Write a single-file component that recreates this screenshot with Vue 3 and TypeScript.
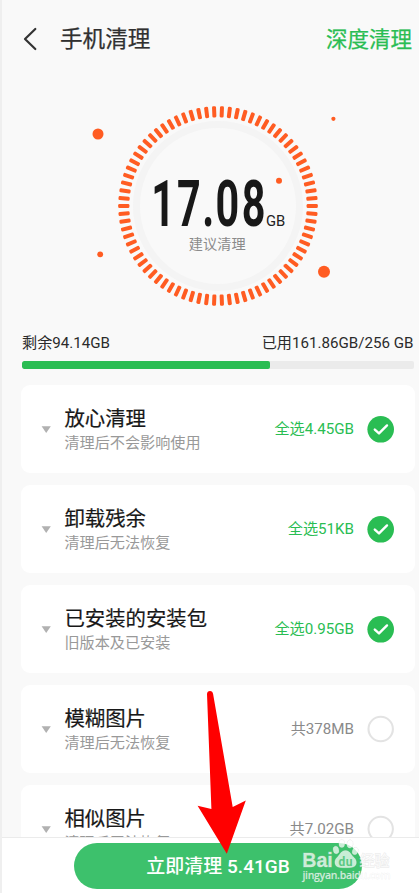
<script setup lang="ts">
interface CleanItem {
  title: string
  note: string
  size: string
  checked: boolean
}

const items: CleanItem[] = [
  { title: '放心清理', note: '清理后不会影响使用', size: '全选4.45GB', checked: true },
  { title: '卸载残余', note: '清理后无法恢复', size: '全选51KB', checked: true },
  { title: '已安装的安装包', note: '旧版本及已安装', size: '全选0.95GB', checked: true },
  { title: '模糊图片', note: '清理后无法恢复', size: '共378MB', checked: false },
  { title: '相似图片', note: '清理后无法恢复', size: '共7.02GB', checked: false },
]

const tickCount = 78
const ticks: number[] = Array.from({ length: tickCount }, (_, i) => (i * 360) / tickCount)
const usedPercent = 63.2
</script>

<template>
  <div class="screen">
    <header class="header">
      <svg class="back" width="14" height="24" viewBox="0 0 14 24">
        <path d="M12.3 2 L2 12 L12.3 22" />
      </svg>
      <h1 class="heading">手机清理</h1>
      <span class="deep">深度清理</span>
    </header>

    <svg class="gauge" width="419" height="240" viewBox="0 80 419 240">
      <circle class="halo" cx="218" cy="206" r="81.5" />
      <rect
        v-for="angle in ticks"
        :key="angle"
        class="orange"
        x="306.6"
        y="204"
        width="11.2"
        height="4"
        rx="1.3"
        :transform="`rotate(${angle} 218 206)`"
      />
      <circle class="orange" cx="98" cy="134" r="5.5" />
      <circle class="orange" cx="333.4" cy="118.8" r="2.1" />
      <circle class="orange" cx="100.2" cy="254.3" r="2.9" />
      <circle class="orange" cx="324" cy="271.7" r="6" />
      <circle class="orange" cx="279" cy="180.8" r="3" />
      <text class="amount" transform="translate(150 226) scale(0.64 1)" x="1.8 42.2 81.7 102.4 143.2">17.08</text>
      <text class="unit" x="266" y="225.6">GB</text>
      <text class="advice" x="188.8" y="249" textLength="57">建议清理</text>
    </svg>

    <section class="storage">
      <div class="labels">
        <span>剩余94.14GB</span>
        <span>已用161.86GB/256 GB</span>
      </div>
      <div class="track"><div class="used" :style="{ width: usedPercent + '%' }"></div></div>
    </section>

    <main class="list">
      <article v-for="item in items" :key="item.title" class="card">
        <svg class="caret" width="10" height="7" viewBox="0 0 10 7"><path d="M0.6 0.3H9.8L5.2 6.9Z" /></svg>
        <div class="info">
          <h2 class="title">{{ item.title }}</h2>
          <p class="note">{{ item.note }}</p>
        </div>
        <span class="size" :class="{ selected: item.checked }">{{ item.size }}</span>
        <svg class="mark" width="28" height="28" viewBox="0 0 28 28">
          <template v-if="item.checked">
            <circle class="filled" cx="13.7" cy="14.3" r="13.3" />
            <path class="tick" d="M7.8 14.6L12 18.4L20 10.4" />
          </template>
          <circle v-else class="empty" cx="13.7" cy="14" r="12.2" />
        </svg>
      </article>
    </main>

    <footer class="footer">
      <button class="clean" type="button">立即清理 5.41GB</button>
    </footer>

    <svg class="pointer" width="50" height="164" viewBox="197 690 50 164">
      <path d="M207 694Q207.2 691 210 691Q212.6 691 213.1 694L232.7 807L245.8 800.6L226.8 853.8L197.6 805.7L211.4 809Z" />
    </svg>

    <svg class="watermark" width="100" height="50" viewBox="300 838 100 50">
      <g class="edge">
        <text class="brand" x="302.3" y="867" textLength="30.5" lengthAdjust="spacingAndGlyphs">Bai</text>
        <ellipse cx="336" cy="850" rx="2.8" ry="3.8" transform="rotate(-12 336 850)" />
        <ellipse cx="341.8" cy="843.6" rx="2.9" ry="4" />
        <ellipse cx="350" cy="844" rx="2.9" ry="4" transform="rotate(10 350 844)" />
        <ellipse cx="355.2" cy="851" rx="2.8" ry="3.8" transform="rotate(18 355.2 851)" />
        <path d="M345.5 850.5C341 850.5 339.8 855 337 857.5C333.6 860.5 334 867 340 867.5C344 867.8 347 867.8 351 867.5C357.5 867 357.6 860.5 354 857.5C351 855 350 850.5 345.5 850.5Z" />
        <text class="brand-cn" x="359.5" y="865.6" textLength="30">经验</text>
        <text class="site" x="302.5" y="878.5" textLength="88">jingyan.baidu.com</text>
      </g>
      <text class="du" x="338.4" y="865.5" textLength="14">du</text>
    </svg>
  </div>
</template>

<style>
html,
body {
  margin: 0;
  overflow: hidden;
}
</style>

<style scoped>
.screen {
  position: relative;
  box-sizing: border-box;
  width: 419px;
  height: 893px;
  overflow: hidden;
  display: flex;
  flex-direction: column;
  border-left: 2px solid #efefef;
  background: #f9f9f9;
  font-family: Roboto, 'Noto Sans CJK SC', sans-serif;
  color: #1c1c1c;
}
.header {
  flex: none;
  height: 80px;
  box-sizing: border-box;
  padding: 0 7px 2px 21px;
  display: flex;
  align-items: center;
}
.back path {
  fill: none;
  stroke: #333;
  stroke-width: 2.2;
  stroke-linecap: round;
  stroke-linejoin: round;
}
.heading {
  margin: 0 0 0 23px;
  padding-top: 2px;
  font-size: 22.6px;
  line-height: 30px;
  font-weight: 400;
  color: #303030;
  -webkit-text-stroke: 0.25px #303030;
}
.deep {
  margin-left: auto;
  padding-top: 2px;
  font-size: 21.5px;
  line-height: 30px;
  color: #2abd53;
  -webkit-text-stroke: 0.25px #2abd53;
}
.gauge {
  flex: none;
  margin-left: -2px;
}
.halo {
  fill: none;
  stroke: #f4f4f4;
  stroke-width: 7;
}
.orange {
  fill: #ff5c22;
}
.amount {
  font-size: 64.5px;
  font-weight: 700;
  fill: #181818;
}
.unit {
  font-size: 14.8px;
  fill: #222;
}
.advice {
  font-size: 14.2px;
  fill: #8b8b8b;
}
.storage {
  flex: none;
  height: 65px;
  box-sizing: border-box;
  padding: 12px 5px 0 20px;
}
.labels {
  height: 29px;
  padding-right: 0.5px;
  display: flex;
  justify-content: space-between;
  font-size: 15.15px;
  line-height: 22px;
  white-space: nowrap;
  color: #2b2b2b;
}
.track {
  height: 8px;
  border-radius: 2px;
  overflow: hidden;
  background: #ebebeb;
}
.used {
  height: 100%;
  border-radius: 2px;
  background: #2abd53;
}
.list {
  flex: 1;
  min-height: 0;
  overflow: hidden;
  padding: 0 4px 0 19px;
  display: flex;
  flex-direction: column;
  gap: 12px;
}
.card {
  flex: none;
  height: 88px;
  box-sizing: border-box;
  padding: 0 20px 0 20px;
  display: flex;
  align-items: center;
  border-radius: 9px;
  background: #fff;
}
.caret {
  margin-top: 1px;
  fill: #b1b1b1;
}
.info {
  margin: 0 auto 0 13.4px;
  padding-top: 3px;
}
.title {
  margin: 0;
  font-size: 20.4px;
  line-height: 25px;
  font-weight: 400;
  color: #181818;
  -webkit-text-stroke: 0.2px #181818;
}
.note {
  margin: 0;
  font-size: 15.15px;
  line-height: 23px;
  color: #999;
}
.size {
  margin-right: 13px;
  font-size: 15.15px;
  line-height: 22px;
  color: #8a8a8a;
}
.size.selected {
  color: #2abd53;
}
.filled {
  fill: #2abd53;
}
.tick {
  fill: none;
  stroke: #fff;
  stroke-width: 2.4;
  stroke-linecap: round;
  stroke-linejoin: round;
}
.empty {
  fill: none;
  stroke: #e3e3e3;
  stroke-width: 2.1;
}
.footer {
  flex: none;
  height: 56px;
  box-sizing: border-box;
  padding-top: 5px;
  border-top: 1px solid #ebebeb;
  background: #fff;
}
.clean {
  display: block;
  width: 288px;
  height: 46px;
  margin: 0 0 0 72px;
  padding: 2px 0 0;
  border: 0;
  border-radius: 23px;
  background: #3dc16c;
  color: #fff;
  font: 500 19px/44px Roboto, 'Noto Sans CJK SC', sans-serif;
}
.pointer {
  position: absolute;
  left: 195px;
  top: 690px;
  fill: #f00;
}
.watermark {
  position: absolute;
  left: 298px;
  top: 838px;
}
.edge {
  fill: rgba(255, 255, 255, 0.72);
  stroke: rgba(200, 200, 200, 0.4);
  stroke-width: 0.9;
  paint-order: stroke;
}
.brand {
  font-family: 'Liberation Sans', sans-serif;
  font-size: 20px;
  font-weight: 700;
}
.brand-cn {
  font-size: 15px;
  font-weight: 500;
}
.site {
  font-family: 'Open Sans', sans-serif;
  font-size: 10.5px;
  font-weight: 600;
  stroke-width: 0.4;
}
.du {
  font-size: 12px;
  font-weight: 700;
  fill: #5cc883;
}
</style>
